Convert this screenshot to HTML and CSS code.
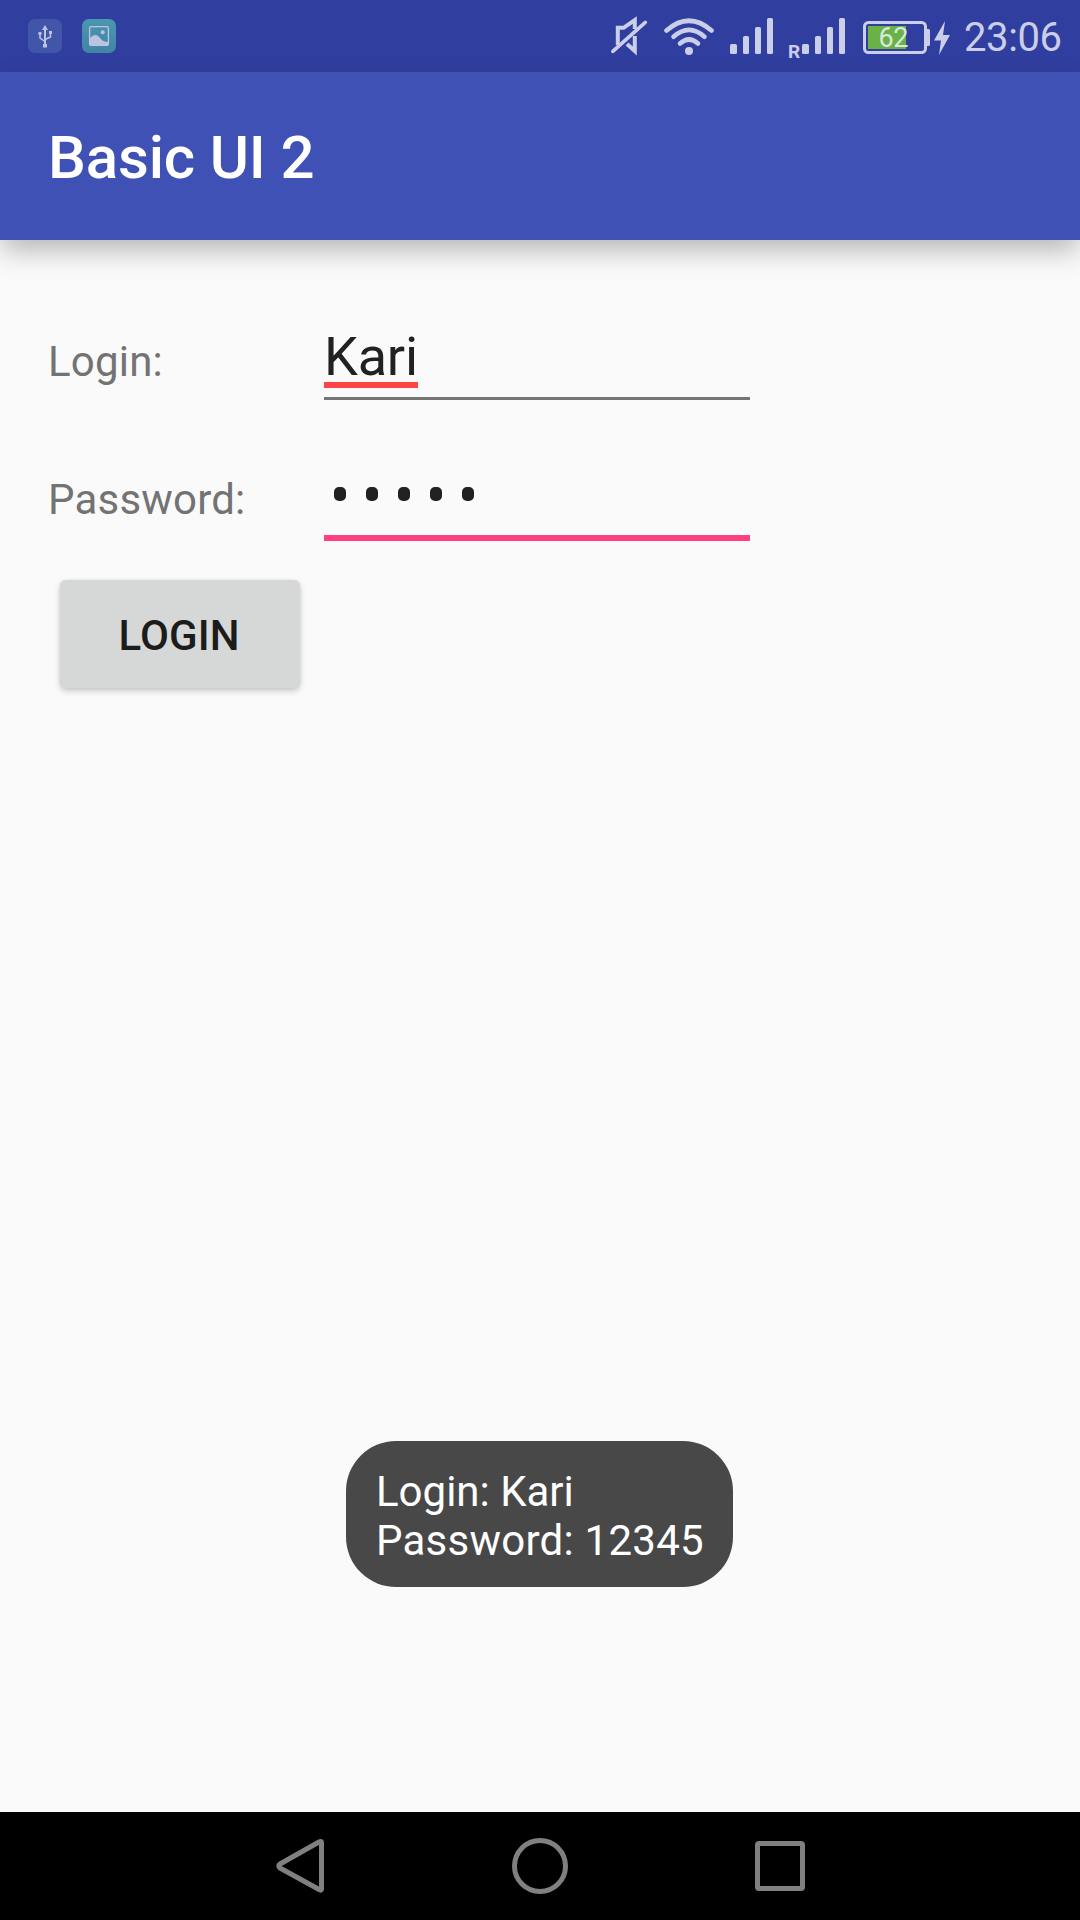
FILE: index.html
```html
<!DOCTYPE html>
<html lang="en">
<head>
<meta charset="utf-8">
<title>Basic UI 2</title>
<link rel="stylesheet" href="styles.css">
</head>
<body>
<div class="screen">
  <header class="status-bar">
    <div class="notifications">
      <svg class="badge" width="34" height="34" viewBox="0 0 34 34">
        <rect width="34" height="34" rx="7" fill="#4156a8"/>
        <g fill="none" stroke="#bcc3e1" stroke-width="1.500">
          <path d="M17 9v17" stroke-width="2"/>
          <path d="M12 15v4l5 3.500M22.500 14v4L17 20.500"/>
        </g>
        <path d="M17 6l3 5h-6zM21 12h3v3h-3zM15 25h4v3.500h-4z" fill="#bcc3e1"/>
        <circle cx="12" cy="14.500" r="1.800" fill="#bcc3e1"/>
      </svg>
      <svg class="badge" width="34" height="34" viewBox="0 0 34 34">
        <defs><linearGradient id="teal" x1="0" y1="0" x2="0" y2="1"><stop offset="0" stop-color="#4b96b0"/><stop offset="1" stop-color="#4284a5"/></linearGradient></defs>
        <rect width="34" height="34" rx="7" fill="url(#teal)"/>
        <rect x="7.600" y="7.600" width="18.800" height="18.800" rx="1.500" fill="none" stroke="#bcc7e2" stroke-width="1.300"/>
        <path d="M8 19c3-3 5.500-4 8-2s4 6 10 6v3.500H8z" fill="#bcc3e1"/>
        <circle cx="20.700" cy="13.300" r="2" fill="#bcc3e1"/>
      </svg>
    </div>
    <div class="system">
      <svg class="mute" width="38" height="40" viewBox="0 0 38 40" fill="none" stroke="#cacee8">
        <path d="M7.800 29V11.800H13.500L24.800 4v9M24.800 20v15L17 28" stroke-width="4"/>
        <path d="M2.800 35.300L35.300 6.300" stroke-width="3.600" stroke-linecap="round"/>
      </svg>
      <svg class="wifi" width="50" height="38" viewBox="0 0 50 38" fill="none" stroke="#cacee8" stroke-width="4.600" stroke-linecap="round">
        <path d="M2.500 12.500Q25-7 47.500 12.500"/>
        <path d="M9.500 18.800Q25 5 40.500 18.800"/>
        <path d="M16 25.500Q25 17.500 34 25.500"/>
        <circle cx="25" cy="33" r="4" fill="#cacee8" stroke="none"/>
      </svg>
      <svg class="signal" width="43" height="36" viewBox="0 0 43 36" fill="#cacee8">
        <rect y="26" width="7" height="10" rx="1.500"/><rect x="13" y="18" width="6" height="18" rx="1.500"/><rect x="25" y="9" width="6" height="27" rx="1.500"/><rect x="37" width="6" height="36" rx="1.500"/>
      </svg>
      <span class="roaming">R</span>
      <svg class="signal" width="43" height="36" viewBox="0 0 43 36" fill="#cacee8">
        <rect y="26" width="7" height="10" rx="1.500"/><rect x="13" y="18" width="6" height="18" rx="1.500"/><rect x="25" y="9" width="6" height="27" rx="1.500"/><rect x="37" width="6" height="36" rx="1.500"/>
      </svg>
      <svg class="battery" width="67" height="33" viewBox="0 0 67 33">
        <rect x="1.500" y="1.500" width="61" height="30" rx="4" fill="none" stroke="#cacee8" stroke-width="3"/>
        <path d="M64 8h1.500a1.500 1.500 0 0 1 1.500 1.500v14a1.500 1.500 0 0 1-1.500 1.500H64z" fill="#cacee8"/>
        <rect x="5" y="5" width="38" height="23" fill="#6ab146"/>
        <text class="level" x="15.500" y="25.700">62</text>
      </svg>
      <svg class="bolt" width="16" height="34" viewBox="0 0 16 34" fill="#cacee8">
        <path d="M11 0L0 19.500H7L5 34 16 14H9z"/>
      </svg>
      <span class="clock">23:06</span>
    </div>
  </header>
  <div class="app-bar"><h1 class="title">Basic UI 2</h1></div>
  <main class="content">
    <div class="field">
      <span class="label">Login:</span>
      <div class="input"><span class="misspelled">Kari</span></div>
    </div>
    <div class="field">
      <span class="label">Password:</span>
      <div class="input focused">
        <span class="dot"></span><span class="dot"></span><span class="dot"></span><span class="dot"></span><span class="dot"></span>
      </div>
    </div>
    <button class="login">LOGIN</button>
    <div class="toast">Login: Kari<br><span class="wide">Password: 12345</span></div>
  </main>
  <nav class="nav-bar">
    <svg width="48" height="56" viewBox="0 0 48 56"><path d="M44.500 3.500Q45.500 3.500 45.500 5V51Q45.500 52.500 44 52L4 30Q1.500 28 4 26L43 4Q44 3.500 44.500 3.500Z"/></svg>
    <svg width="56" height="56" viewBox="0 0 56 56"><circle cx="28" cy="28" r="25.500"/></svg>
    <svg width="50" height="56" viewBox="0 0 50 56"><rect x="2.500" y="5.500" width="45" height="45" rx="1.500"/></svg>
  </nav>
</div>
</body>
</html>
```
FILE: styles.css
```css
* { box-sizing: border-box; }
body {
  margin: 0;
  font-family: Roboto, "Liberation Sans", sans-serif;
}
.screen {
  display: flex;
  flex-direction: column;
  width: 1080px;
  height: 1920px;
  background: #fafafa;
  overflow: hidden;
}
svg { display: block; flex: none; }
.status-bar {
  display: flex;
  justify-content: space-between;
  height: 72px;
  padding: 0 16px 0 28px;
  background: #303f9f;
  color: #cacee8;
}
.notifications { display: flex; gap: 20px; padding-top: 19px; }
.system { display: flex; align-items: flex-start; }
.mute { margin: 16px 16px 0 0; }
.wifi { margin: 18px 16px 0 0; }
.signal { margin-top: 18px; }
.roaming {
  width: 14px;
  margin: 41px 0 0 15px;
  font-size: 19px;
  line-height: 22px;
  font-weight: 700;
}
.battery { margin: 21px 4px 0 18px; }
.level { font-size: 27px; letter-spacing: -.5px; fill: #d8e8dc; }
.bolt { margin: 21px 14px 0 0; }
.clock { width: 100px; font-size: 40px; line-height: 46px; margin-top: 15px; letter-spacing: -.4px; }
.app-bar {
  display: flex;
  align-items: center;
  height: 168px;
  padding: 4px 48px 0;
  background: #3f51b5;
  box-shadow: 0 12px 26px -2px rgba(0, 0, 0, .28);
}
.title { margin: 0; font-size: 60px; line-height: 70px; font-weight: 500; letter-spacing: -.15px; color: #fff; }
.content {
  display: flex;
  flex-direction: column;
  flex: 1;
  padding: 82px 48px 0;
}
.field { display: flex; align-items: flex-start; height: 138px; }
.label {
  width: 276px;
  padding-top: 15px;
  font-size: 42px;
  line-height: 49px;
  letter-spacing: .2px;
  color: #737373;
}
.input {
  width: 426px;
  height: 78px;
  border-bottom: 3px solid #757575;
  font-size: 54px;
  line-height: 69px;
  color: #212121;
}
.misspelled {
  display: inline-block;
  width: 94px;
  height: 66px;
  border-bottom: 6px solid #ff4444;
  letter-spacing: -.2px;
}
.focused {
  display: flex;
  gap: 20px;
  height: 81px;
  padding: 27px 10px 0;
  border-bottom: 6px solid #ff4081;
}
.dot { width: 12px; height: 14px; border-radius: 5px; background: #212121; }
.login {
  width: 240px;
  height: 108px;
  margin: -18px 0 0 12px;
  padding: 3px 2px 0 0;
  border: 0;
  border-radius: 6px;
  background: #d6d8d7;
  box-shadow: 0 3px 6px rgba(0, 0, 0, .2), 0 0 3px rgba(0, 0, 0, .06);
  font: 500 42px/49px Roboto, "Liberation Sans", sans-serif;
  letter-spacing: .1px;
  color: #1c1c1c;
}
.toast {
  align-self: center;
  width: 387px;
  height: 146px;
  margin: auto 1px 225px 0;
  padding: 26px 30px 0;
  border-radius: 50px;
  background: #484848;
  font-size: 42px;
  line-height: 49px;
  color: #fff;
  white-space: nowrap;
}
.wide { letter-spacing: .25px; }
.nav-bar {
  display: flex;
  justify-content: space-between;
  align-items: flex-start;
  height: 108px;
  padding: 26px 275px 0 276px;
  background: #000;
  fill: none;
  stroke: #808080;
  stroke-width: 5;
  stroke-linejoin: round;
}
```
